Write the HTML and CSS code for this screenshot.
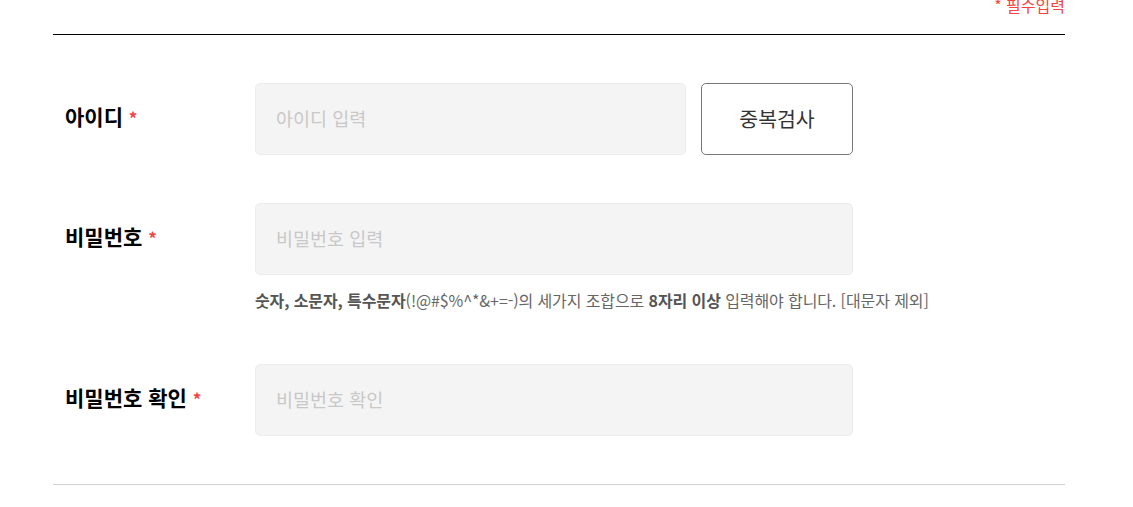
FILE: index.html
```html
<!DOCTYPE html>
<html lang="ko">
<head>
    <meta charset="UTF-8">
    <meta name="viewport" content="width=device-width, initial-scale=1.0">
    <title>회원가입</title>
    <link rel="stylesheet" href="styles.css">
</head>
<body>
    <div class="join-wrap">
        <div class="form-head">
            <span class="req-note">* 필수입력</span>
        </div>
        <form class="form-list" id="joinForm">
            <div class="form-row">
                <label class="row-label" for="userid">아이디 <span class="star">*</span></label>
                <div class="row-field">
                    <div class="field-line">
                        <input type="text" id="userid" class="text-input short" placeholder="아이디 입력">
                        <button type="button" class="btn-check">중복검사</button>
                    </div>
                </div>
            </div>
            <div class="form-row">
                <label class="row-label" for="userpw">비밀번호 <span class="star">*</span></label>
                <div class="row-field">
                    <input type="password" id="userpw" class="text-input" placeholder="비밀번호 입력">
                    <p class="help"><b>숫자, 소문자, 특수문자</b>(!@#$%^*&amp;+=-)의 세가지 조합으로 <b>8자리 이상</b> 입력해야 합니다. [대문자 제외]</p>
                </div>
            </div>
            <div class="form-row">
                <label class="row-label" for="userpw2">비밀번호 확인 <span class="star">*</span></label>
                <div class="row-field">
                    <input type="password" id="userpw2" class="text-input" placeholder="비밀번호 확인">
                </div>
            </div>
        </form>
    </div>
</body>
</html>
```

FILE: styles.css
```css
body {
    margin: 0;
    background: #fff;
    font-family: "Noto Sans CJK KR", "Noto Sans", sans-serif;
    color: #000;
}
.join-wrap {
    width: 1012px;
    margin: 0 53px;
}
.form-head {
    margin-top: -5px;
    padding-bottom: 19px;
    border-bottom: 1px solid #000;
    text-align: right;
    font-size: 16px;
    line-height: 20px;
    height: 20px;
}
.req-note {
    color: #f5433f;
}
.star {
    color: #f5433f;
}
.form-list {
    margin: 0;
    padding: 24px 0;
    border-bottom: 1px solid #d3d3d3;
}
.form-row {
    display: flex;
    align-items: flex-start;
    padding: 24px 0;
}
.row-label {
    width: 190px;
    height: 72px;
    padding-left: 12px;
    flex-shrink: 0;
    font-size: 21px;
    font-weight: 700;
    line-height: 67px;
}
.row-label .star {
    font-size: 17px;
}
.field-line {
    display: flex;
    gap: 15px;
}
.text-input {
    box-sizing: border-box;
    display: block;
    width: 598px;
    height: 72px;
    padding: 0 20px 3px;
    background: #f4f4f4;
    border: 1px solid #ededed;
    border-radius: 5px;
    font-family: inherit;
    font-size: 18.5px;
    color: #333;
    outline: none;
}
.text-input.short {
    width: 431px;
}
.text-input::placeholder {
    color: #c8c8c8;
}
.btn-check {
    width: 152px;
    height: 72px;
    padding-bottom: 3px;
    background: #fff;
    border: 1px solid #777;
    border-radius: 5px;
    font-family: inherit;
    font-size: 20.5px;
    color: #333;
    cursor: pointer;
}
.help {
    margin: 13px 0 3px;
    font-size: 16px;
    line-height: 25px;
    color: #666;
    letter-spacing: -0.1px;
}
.help b {
    color: #555;
}
```
